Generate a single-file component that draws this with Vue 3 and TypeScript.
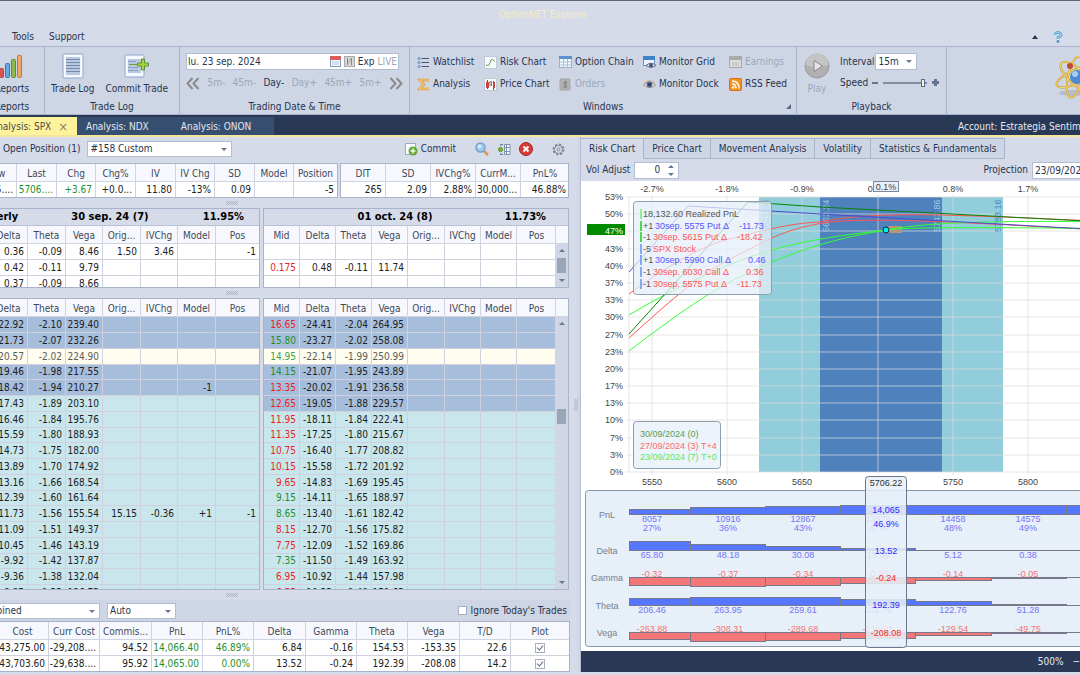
<script setup lang="ts">
import { ref } from 'vue'

interface Row { cells: string[]; tone?: string; mid?: string }
interface Pane { name: string; left: string; center: string; right: string; cols: string[]; widths: number[]; rows: Row[]; scroll: boolean }
interface Section { id: string; titled: boolean; panes: Pane[] }

const leftCols = ['Delta', 'Theta', 'Vega', 'Orig...', 'IVChg', 'Model', 'Pos']
const leftWidths = [38, 38, 37, 38, 37, 38, 43]
const rightCols = ['Mid', 'Delta', 'Theta', 'Vega', 'Orig...', 'IVChg', 'Model', 'Pos']
const rightWidths = [36, 36, 36, 36, 37, 36, 36, 39]

const pad = (text: string, count: number): string[] => {
  const cells = text.split('|')
  while (cells.length < count) cells.push('')
  return cells
}
const chainLeft = [
  '-22.92|-2.10|239.40', '-21.73|-2.07|232.26', '-20.57|-2.02|224.90', '-19.46|-1.98|217.55',
  '-18.42|-1.94|210.27|||-1', '-17.43|-1.89|203.10', '-16.46|-1.84|195.76', '-15.59|-1.80|188.93',
  '-14.73|-1.75|182.00', '-13.89|-1.70|174.92', '-13.16|-1.66|168.54', '-12.39|-1.60|161.64',
  '-11.73|-1.56|155.54|15.15|-0.36|+1|-1', '-11.09|-1.51|149.37', '-10.45|-1.46|143.19',
  '-9.92|-1.42|137.87', '-9.36|-1.38|132.04', '-8.85|-1.33|126.73',
]
const chainRight = [
  '16.65|-24.41|-2.04|264.95', '15.80|-23.27|-2.02|258.08', '14.95|-22.14|-1.99|250.99', '14.15|-21.07|-1.95|243.89',
  '13.35|-20.02|-1.91|236.58', '12.65|-19.05|-1.88|229.57', '11.95|-18.11|-1.84|222.41', '11.35|-17.25|-1.80|215.67',
  '10.75|-16.40|-1.77|208.82', '10.15|-15.58|-1.72|201.92', '9.65|-14.83|-1.69|195.45', '9.15|-14.11|-1.65|188.97',
  '8.65|-13.40|-1.61|182.42', '8.15|-12.70|-1.56|175.82', '7.75|-12.09|-1.52|169.86', '7.35|-11.50|-1.49|163.92',
  '6.95|-10.92|-1.44|157.98', '6.55|-10.33|-1.40|151.63',
]
const risingMids = [1, 2, 3, 11, 12, 15]
const tone = (i: number, lastBlue: number) => (i === 2 ? 'cream' : i <= lastBlue ? 'blue' : 'cyan')

const sections: Section[] = [
  {
    id: 'hedge', titled: true, panes: [
      { name: 'left', left: 'Quarterly', center: '30 sep. 24 (7)', right: '11.95%', cols: leftCols, widths: leftWidths, scroll: false,
        rows: ['0.36|-0.09|8.46|1.50|3.46||-1', '0.42|-0.11|9.79', '0.37|-0.09|8.66'].map(t => ({ cells: pad(t, 7) })) },
      { name: 'right', left: '', center: '01 oct. 24 (8)', right: '11.73%', cols: rightCols, widths: rightWidths, scroll: true,
        rows: ['', '0.175|0.48|-0.11|11.74', ''].map(t => ({ cells: pad(t, 8), mid: 'down' })) },
    ],
  },
  {
    id: 'chain', titled: false, panes: [
      { name: 'left', left: '', center: '', right: '', cols: leftCols, widths: leftWidths, scroll: false,
        rows: chainLeft.map((t, i) => ({ cells: pad(t, 7), tone: tone(i, 4) })) },
      { name: 'right', left: '', center: '', right: '', cols: rightCols, widths: rightWidths, scroll: true,
        rows: chainRight.map((t, i) => ({ cells: pad(t, 8), tone: tone(i, 5), mid: risingMids.includes(i) ? 'up' : 'down' })) },
    ],
  },
]

const quoteCols = ['Low', 'Last', 'Chg', 'Chg%', 'IV', 'IV Chg', 'SD', 'Model', 'Position']
const quoteWidths = [40, 40, 39, 40, 40, 39, 40, 39, 43]
const quote = ['5695....', '5706....', '+3.67', '+0.0...', '11.80', '-13%', '0.09', '', '-5']
const statCols = ['DIT', 'SD', 'IVChg%', 'CurrM...', 'PnL%']
const statWidths = [45, 45, 45, 45, 48]
const stats = ['265', '2.09', '2.88%', '30,000...', '46.88%']

const totalCols = ['Cost', 'Curr Cost', 'Commis...', 'PnL', 'PnL%', 'Delta', 'Gamma', 'Theta', 'Vega', 'T/D', 'Plot']
const totalWidths = [52, 51, 52, 51, 51, 52, 51, 51, 52, 51, 58]
const totals = [
  ['43,275.00', '-29,208....', '94.52', '14,066.40', '46.89%', '6.84', '-0.16', '154.53', '-153.35', '22.6'],
  ['43,703.60', '-29,638....', '95.92', '14,065.00', '0.00%', '13.52', '-0.24', '192.39', '-208.08', '14.2'],
]

const adjust = ref('0')
const projection = ref('23/09/2024')
const tradeDate = ref('lu. 23 sep. 2024')
const speed = ref(95)
const steps = ['5m-', '45m-', 'Day-', 'Day+', '45m+', '5m+']
const chartTabs = ['Risk Chart', 'Price Chart', 'Movement Analysis', 'Volatility', 'Statistics & Fundamentals']

const yLabels = ['53%', '50%', '47%', '43%', '40%', '37%', '33%', '30%', '27%', '23%', '20%', '17%', '13%', '10%', '7%', '3%', '0%']
const gridY = (i: number) => Math.round(16 + (i * 275) / 16)
const xTicks = [
  { x: 71, strike: '5550', move: '-2.7%' }, { x: 146, strike: '5600', move: '-1.8%' },
  { x: 221, strike: '5650', move: '-0.9%' }, { x: 297, strike: '', move: '0.0%' },
  { x: 372, strike: '5750', move: '0.8%' }, { x: 447, strike: '5800', move: '1.7%' },
]
const curves = [
  { color: '#ff5555', d: 'M48 113 C82 88 120 64 152 57 C190 47 215 42 239 41 C270 34 320 33 362 34 C430 36 470 38 560 42' },
  { color: '#ff5555', d: 'M48 157 C75 133 110 100 140 83 C180 62 200 50 232 44 C255 38 300 39 340 40 C400 42 460 46 560 51' },
  { color: '#33ff33', d: 'M48 134 C90 109 140 85 175 74 C215 61 245 56 305 49 C335 46 380 46 560 48' },
  { color: '#33ff33', d: 'M48 170 C95 134 135 106 165 93 C205 73 245 59 305 49 C345 42 390 39 560 41' },
  { color: '#4a4ad2', d: 'M48 91 L107 25 L239 33 L560 51' },
  { color: '#078407', d: 'M48 153 L167 21 L239 26 L560 43' },
]
const deviations = [
  { x: 188, text: '5621.94', fill: '#5f9fc8' }, { x: 248, text: '5662.24', fill: '#9cc9e6' },
  { x: 359, text: '5742.86', fill: '#9cc9e6' }, { x: 420, text: '5783.16', fill: '#4f86c0' },
]
const legs = [
  { bar: '#90ee90', qty: '', name: '18,132.60 Realized PnL', nx: 62, value: '', vx: 0, color: '#555' },
  { bar: '#50d850', qty: '+1', name: '30sep. 5575 Put Δ', nx: 74, value: '-11.73', vx: 158, color: '#5454ff' },
  { bar: '#50d850', qty: '-1', name: '30sep. 5615 Put Δ', nx: 72, value: '-18.42', vx: 156, color: '#ff5555' },
  { bar: '#84a9f0', qty: '-5', name: 'SPX Stock', nx: 72, value: '', vx: 0, color: '#ff5555' },
  { bar: '#84a9f0', qty: '+1', name: '30sep. 5990 Call Δ', nx: 74, value: '0.46', vx: 167, color: '#5454ff' },
  { bar: '#84a9f0', qty: '-1', name: '30sep. 6030 Call Δ', nx: 72, value: '0.36', vx: 165, color: '#ff5555' },
  { bar: '#84a9f0', qty: '-1', name: '30sep. 5575 Put Δ', nx: 72, value: '-11.73', vx: 156, color: '#ff5555' },
]
const legY = (i: number) => Math.round(36 + i * 11.6)

const edges = [48, 109, 184, 259, 334, 410, 485, 560]
const centers = [71, 147, 222, 297, 372, 447]
const greeks = [
  { name: 'PnL', base: 333, dir: -1, h: [5, 7, 8, 9, 9, 9, 9], ty: 341, vals: ['8057', '10916', '12867', '13976', '14458', '14575'], pct: ['27%', '36%', '43%', '47%', '48%', '49%'], now: '14,065', nowY: 332 },
  { name: 'Delta', base: 369, dir: -1, h: [9, 6, 4, 2, 0, 0, 0], ty: 377, vals: ['65.80', '48.18', '30.08', '15.09', '5.12', '0.38'], pct: [], now: '13.52', nowY: 373 },
  { name: 'Gamma', base: 396, dir: 1, h: [8, 9, 8, 6, 3, 1, 0], ty: 396, vals: ['-0.32', '-0.37', '-0.34', '-0.25', '-0.14', '-0.05'], pct: [], now: '-0.24', nowY: 400 },
  { name: 'Theta', base: 424, dir: -1, h: [7, 8, 8, 6, 4, 1, 0], ty: 432, vals: ['206.46', '263.95', '259.61', '201.79', '122.76', '51.28'], pct: [], now: '192.39', nowY: 427 },
  { name: 'Vega', base: 451, dir: 1, h: [7, 9, 8, 6, 3, 1, 0], ty: 451, vals: ['-263.88', '-308.31', '-289.68', '-218.91', '-129.54', '-49.75'], pct: [], now: '-208.08', nowY: 455 },
]
</script>

<template>
  <div class="app">
    <header class="titlebar">OptionNET Explorer</header>
    <nav class="menubar">
      <button>Tools</button>
      <button>Support</button>
      <span class="grow"></span>
      <button class="icon" aria-label="Collapse ribbon"><svg width="6" height="4"><path d="M0 4L3 0L6 4Z" fill="#27344d" /></svg></button>
      <button class="icon" aria-label="Help">
        <svg width="10" height="12" viewBox="0 0 10 12"><path d="M2 4Q2 1.5 5 1.5T8 4Q8 5.5 5 6.5V8" fill="none" stroke="#4b93c4" stroke-width="2.6" /><path d="M2 4Q2 1.5 5 1.5T8 4Q8 5.5 5 6.5V8" fill="none" stroke="#9fd2f0" stroke-width="1.2" /><circle cx="5" cy="10.5" r="1.4" fill="#4b93c4" /></svg>
      </button>
    </nav>

    <section class="ribbon">
      <div class="group reports">
        <button class="big">
          <svg width="32" height="26" viewBox="0 0 32 26"><g stroke-width="1"><rect x="8.5" y="15.5" width="4" height="9" rx="1" fill="#d9534e" stroke="#a94a4a" /><rect x="14.5" y="10.5" width="4" height="14" rx="1" fill="#69a9e0" stroke="#3d74ad" /><rect x="20.5" y="6.5" width="4" height="18" rx="1" fill="#8cba4d" stroke="#5f8d33" /><rect x="26.5" y="2.5" width="4" height="22" rx="1" fill="#f0a860" stroke="#b57a40" /></g></svg>
          <span>Reports</span>
        </button>
        <div class="caption">Reports</div>
      </div>
      <div class="group log">
        <div class="tools">
          <button class="big">
            <svg width="22" height="26" viewBox="0 0 22 26"><rect x="1" y="1" width="20" height="24" rx="1" fill="#f4f8ff" stroke="#8ea4ca" /><rect x="4" y="4" width="14" height="18" fill="#b9c9e2" /><path d="M4 6.5H18M4 9.5H18M4 12.5H18M4 15.5H18M4 18.5H18" stroke="#7489ad" /></svg>
            <span>Trade Log</span>
          </button>
          <button class="big">
            <svg width="26" height="26" viewBox="0 0 26 26"><rect x="1" y="2" width="19" height="22" rx="1" fill="#f4f8ff" stroke="#8ea4ca" /><rect x="4" y="6" width="13" height="14" fill="#b9c9e2" /><path d="M4 8.5H12M4 14.5H14M4 17.5H14" stroke="#8da0c1" /><path d="M5 11.5H15" stroke="#6ca032" /><path d="M17.500 6h3v4h4v3h-4v4h-3v-4h-4v-3h4z" fill="#a5d23c" stroke="#5e942d" /></svg>
            <span>Commit Trade</span>
          </button>
        </div>
        <div class="caption">Trade Log</div>
      </div>
      <div class="group date">
        <div class="datebox">
          <input v-model="tradeDate" aria-label="Trading date" />
          <svg width="11" height="11" viewBox="0 0 11 11"><rect x=".5" y=".5" width="10" height="10" fill="#eef4ff" stroke="#8796bd" /><rect width="11" height="4" fill="#d8605a" /><path d="M2 6h7M2 8h7" stroke="#b9cae8" /></svg>
          <svg width="11" height="11" viewBox="0 0 11 11"><rect x=".5" y=".5" width="10" height="10" fill="#d7d7d7" stroke="#aaa" /><path d="M3.5 2v7M3.5 6h2M7.5 2v7M5.5 4h2" stroke="#888" fill="none" /></svg>
          <span>Exp</span><span class="off">LIVE</span>
        </div>
        <div class="steps">
          <button aria-label="Back"><svg width="14" height="13" viewBox="0 0 14 13"><path d="M6.5 1L1.5 6.5L6.5 12M12.5 1L7.5 6.5L12.5 12" fill="none" stroke="#8b8b8b" stroke-width="2" /></svg></button>
          <button v-for="s in steps" :key="s" :class="{ off: s !== 'Day-' }">{{ s }}</button>
          <button aria-label="Forward"><svg width="14" height="13" viewBox="0 0 14 13"><path d="M1.5 1L6.5 6.5L1.5 12M7.5 1L12.5 6.5L7.5 12" fill="none" stroke="#8b8b8b" stroke-width="2" /></svg></button>
        </div>
        <div class="caption">Trading Date &amp; Time</div>
      </div>
      <div class="group windows">
        <div class="wingrid">
          <button><svg width="13" height="13" viewBox="0 0 13 13"><path d="M4.5 2.5H12M4.5 6.5H12M4.5 10.5H12" stroke="#4a5568" /><g fill="#cfe2fa" stroke="#5b87c5"><circle cx="2" cy="2.5" r="1" /><circle cx="2" cy="6.5" r="1" /><circle cx="2" cy="10.5" r="1" /></g></svg>Watchlist</button>
          <button><svg width="13" height="13" viewBox="0 0 13 13"><rect x=".5" y=".5" width="12" height="12" fill="#f6fafb" stroke="#c1cad8" /><path d="M2 9Q5 11 6 7Q7 2 9 4T11 5" fill="none" stroke="#6c9a64" /></svg>Risk Chart</button>
          <button><svg width="13" height="13" viewBox="0 0 13 13"><rect x=".5" y=".5" width="12" height="11" fill="#f2f8ff" stroke="#9bb1d0" /><rect width="13" height="3" fill="#5f92cc" /><path d="M1 6H12M1 9H12M4.5 3V12M8.5 3V12" stroke="#a8bfdd" /></svg>Option Chain</button>
          <button><svg width="13" height="13" viewBox="0 0 13 13"><rect x=".5" y=".5" width="11" height="9" fill="#eaf3ff" stroke="#6d94c4" /><rect width="12" height="4" fill="#3e83cc" /><path d="M3 9.5Q8 5 13 9.5Q8 13 3 9.5" fill="#dfe4ee" stroke="#596985" /><circle cx="8" cy="9.5" r="2" fill="#435779" /></svg>Monitor Grid</button>
          <button class="off"><svg width="13" height="13" viewBox="0 0 13 13"><rect x=".5" y=".5" width="12" height="11" fill="#ddd" stroke="#aaa" /><rect width="13" height="4" fill="#aaa" /><path d="M3 7h7M3 9h7" stroke="#aaa" stroke-dasharray="2 1" /></svg>Earnings</button>
          <button><svg width="13" height="13" viewBox="0 0 13 13"><path d="M10.5 3.5V2H2.500L7 6.5L2.500 11H10.5V9.5" fill="none" stroke="#d99a48" stroke-width="2.6" /><path d="M10.5 3.5V2H2.500L7 6.5L2.500 11H10.5V9.5" fill="none" stroke="#f9c878" stroke-width="1.2" /></svg>Analysis</button>
          <button><svg width="13" height="13" viewBox="0 0 13 13"><rect x=".5" y=".5" width="12" height="12" fill="#fafafa" stroke="#c1cad8" /><path d="M3.5 2v9M9.5 3v9" stroke="#555" /><path d="M6 8V3.500h1.500V8" fill="none" stroke="#777" /><rect x="2" y="4" width="3" height="6" fill="#cc4141" /><rect x="9" y="4" width="2" height="6" fill="#cc4141" /></svg>Price Chart</button>
          <button class="off"><svg width="13" height="13" viewBox="0 0 13 13"><rect x="1" y="1" width="10" height="11" rx="1" fill="#b2b2b2" stroke="#a4a4a4" /><path d="M8.5 4.5Q6 3 4.5 5Q5 6.5 6.5 6.5Q8.5 7 7.5 9Q6 10 4 8.5M6.300 2.5V10.5" fill="none" stroke="#7f7f7f" /></svg>Orders</button>
          <button><svg width="13" height="13" viewBox="0 0 13 13"><path d="M.5 7Q6.5 1 12.5 7Q6.5 12 .5 7" fill="#f5f0ea" stroke="#a78f7c" /><path d="M1 5Q6.5 0 12 5" fill="none" stroke="#d5af8e" /><circle cx="6.5" cy="6.5" r="3" fill="#496c9d" /><circle cx="6.5" cy="6.5" r="1.3" fill="#1d2c48" /></svg>Monitor Dock</button>
          <button><svg width="13" height="13" viewBox="0 0 13 13"><rect x=".5" y=".5" width="12" height="12" rx="1" fill="#f78f20" stroke="#d97318" /><circle cx="4" cy="9.5" r="1.2" fill="#fff" /><path d="M3 6Q7 6 7 10.5M3 3Q10 3 10 10.5" fill="none" stroke="#fff" stroke-width="1.4" /></svg>RSS Feed</button>
        </div>
        <div class="caption">Windows</div>
        <svg class="launcher" width="5" height="5"><path d="M5 0V5H0Z" fill="#596b8b" /></svg>
      </div>
      <div class="group playback">
        <div class="tools">
          <button class="big off">
            <svg width="26" height="26" viewBox="0 0 26 26"><circle cx="13" cy="13" r="12" fill="#b0b0b0" stroke="#999" /><path d="M1.5 12A11.5 11.5 0 0 1 24.5 12Q13 16 1.5 12" fill="#c4c4c4" /><path d="M10 7.5L18.5 13L10 18.5Z" fill="#e3e3e3" stroke="#888" /></svg>
            <span>Play</span>
          </button>
          <div class="playopts">
            <label>Interval
              <span class="combo interval"><select><option>15m</option></select></span>
            </label>
            <label>Speed <i class="minus"></i><input v-model="speed" type="range" /><i class="plus"></i></label>
          </div>
        </div>
        <div class="caption">Playback</div>
      </div>
      <svg class="logo" width="42" height="46" viewBox="0 0 42 46"><ellipse cx="18" cy="37" rx="14" ry="3" fill="#b5bccb" /><g fill="none" stroke="#c4982f" stroke-width="2"><ellipse cx="20" cy="21" rx="20" ry="7" transform="rotate(-25 20 21)" /><ellipse cx="20" cy="21" rx="7" ry="21" transform="rotate(12 20 21)" /><ellipse cx="22" cy="21" rx="21" ry="8" transform="rotate(42 22 21)" /></g><g fill="none" stroke="#f5d765"><ellipse cx="20" cy="21" rx="20" ry="7" transform="rotate(-25 20 21)" /><ellipse cx="20" cy="21" rx="7" ry="21" transform="rotate(12 20 21)" /><ellipse cx="22" cy="21" rx="21" ry="8" transform="rotate(42 22 21)" /></g><circle cx="22" cy="21" r="7" fill="#4e88d0" /><circle cx="20" cy="18" r="3" fill="#a9ccf2" /><circle cx="15" cy="10" r="3" fill="#c54830" /><circle cx="28" cy="41" r="3" fill="#cc3a44" /></svg>
    </section>

    <nav class="doctabs">
      <button class="doc active">Analysis: SPX <span>×</span></button>
      <button class="doc">Analysis: NDX</button>
      <button class="doc onon">Analysis: ONON</button>
      <span class="account">Account: Estrategia Sentimi</span>
    </nav>

    <main class="work">
      <section class="analysis">
        <div class="toolbar">
          <label for="position">Open Position (1)</label>
          <span class="combo position"><select id="position"><option>#158 Custom</option></select></span>
          <span class="grow"></span>
          <button class="commit"><svg width="13" height="13" viewBox="0 0 13 13"><rect x=".5" y=".5" width="10" height="11" fill="#f8fbff" stroke="#9aabc9" /><circle cx="8" cy="8" r="4.5" fill="#69a638" /><path d="M8 5.5v5M5.5 8h5" stroke="#f0ffe4" stroke-width="1.5" /></svg>Commit</button>
          <button class="search" aria-label="Find"><svg width="14" height="14" viewBox="0 0 14 14"><path d="M9 9L13 13" stroke="#d39a57" stroke-width="2.5" /><circle cx="5.5" cy="5.5" r="4.5" fill="#9acbf2" stroke="#7b9fd0" stroke-width="1.5" /><circle cx="4.5" cy="4.5" r="2" fill="#d5ecff" /></svg></button>
          <button aria-label="Add columns"><svg width="14" height="13" viewBox="0 0 14 13"><path d="M7.500 1.5H13V11.5H7.500Z" fill="#f6f8fc" stroke="#8090b0" /><path d="M7.500 4.5H13M7.500 8.500H13M9.500 1V12" stroke="#8090b0" /><path d="M3.5 4v5M1 6.5h5" stroke="#74a93e" stroke-width="3" /><path d="M6 1.500H3.500V3M6 11.500H3.500V10" stroke="#65779b" fill="none" /></svg></button>
          <button aria-label="Delete"><svg width="14" height="14" viewBox="0 0 14 14"><circle cx="7" cy="7" r="6.5" fill="#d83c35" stroke="#a32925" /><path d="M4.5 4.5L9.5 9.5M9.5 4.5L4.5 9.5" stroke="#fff" stroke-width="2" /></svg></button>
          <button class="gear" aria-label="Settings"><svg width="13" height="13" viewBox="0 0 13 13"><circle cx="6.5" cy="6.5" r="5" fill="none" stroke="#7b8699" stroke-width="2" stroke-dasharray="2.2 1.7" /><circle cx="6.5" cy="6.5" r="4" fill="#dde3ee" stroke="#7b8699" /><circle cx="6.5" cy="6.5" r="1.5" fill="#d5dbe8" stroke="#7b8699" /></svg></button>
        </div>

        <div class="summary">
          <div class="pane"><table class="quote">
            <colgroup><col v-for="(w, i) in quoteWidths" :key="i" :style="{ width: w + 'px' }" /></colgroup>
            <thead><tr><th v-for="c in quoteCols" :key="c">{{ c }}</th></tr></thead>
            <tbody><tr><td v-for="(c, i) in quote" :key="i" :class="{ up: i === 1 || i === 2 }">{{ c }}</td></tr></tbody>
          </table></div>
          <div class="pane edge"><table>
            <colgroup><col v-for="(w, i) in statWidths" :key="i" :style="{ width: w + 'px' }" /></colgroup>
            <thead><tr><th v-for="c in statCols" :key="c">{{ c }}</th></tr></thead>
            <tbody><tr><td v-for="c in stats" :key="c">{{ c }}</td></tr></tbody>
          </table></div>
        </div>

        <template v-for="s in sections" :key="s.id">
          <div class="splitter"><i></i></div>
          <div class="panes" :class="s.id">
            <div v-for="p in s.panes" :key="p.name" class="pane" :class="p.name">
              <div v-if="s.titled" class="expiry"><span>{{ p.left }}</span><span>{{ p.center }}</span><span>{{ p.right }}</span></div>
              <div class="panebody">
                <div class="tablebox">
                  <table>
                    <colgroup><col v-for="(w, i) in p.widths" :key="i" :style="{ width: w + 'px' }" /></colgroup>
                    <thead><tr><th v-for="c in p.cols" :key="c">{{ c }}</th></tr></thead>
                    <tbody>
                      <tr v-for="(r, ri) in p.rows" :key="ri" :class="r.tone">
                        <td v-for="(c, ci) in r.cells" :key="ci" :class="ci === 0 ? r.mid : ''">{{ c }}</td>
                      </tr>
                    </tbody>
                  </table>
                </div>
                <div v-if="p.scroll" class="scroll">
                  <div class="corner"></div>
                  <svg width="6" height="3"><path d="M0 3L3 0L6 3Z" fill="#66778f" /></svg>
                  <span class="before"></span><span class="thumb"></span><span class="after"></span>
                  <svg width="6" height="3"><path d="M0 0L3 3L6 0Z" fill="#66778f" /></svg>
                </div>
              </div>
            </div>
          </div>
        </template>
        <div class="splitter"><i></i></div>

        <div class="bottombar">
          <span class="combo mode"><select aria-label="Mode"><option>Combined</option></select></span>
          <span class="combo auto"><select aria-label="Grouping"><option>Auto</option></select></span>
          <span class="grow"></span>
          <label class="ignore"><input type="checkbox" />Ignore Today's Trades</label>
        </div>
        <div class="pane totals"><table>
          <colgroup><col v-for="(w, i) in totalWidths" :key="i" :style="{ width: w + 'px' }" /></colgroup>
          <thead><tr><th v-for="c in totalCols" :key="c">{{ c }}</th></tr></thead>
          <tbody>
            <tr v-for="(r, ri) in totals" :key="ri">
              <td v-for="(c, i) in r" :key="i" :class="{ up: i === 3 || i === 4 }">{{ c }}</td>
              <td class="plot"><input type="checkbox" checked :aria-label="'Plot row ' + (ri + 1)" /></td>
            </tr>
          </tbody>
        </table></div>
      </section>

      <div class="vsplit"><i></i></div>

      <section class="charts">
        <nav class="charttabs"><button v-for="(t, i) in chartTabs" :key="t" :class="{ on: i === 0 }">{{ t }}</button></nav>
        <div class="chartopts">
          <label>Vol Adjust <span class="spin"><input v-model="adjust" /><svg width="6" height="11"><path d="M0 3L3 0L6 3Z M0 8L3 11L6 8Z" fill="#66778f" /></svg></span></label>
          <span class="grow"></span>
          <label class="proj">Projection <input v-model="projection" /></label>
        </div>
        <svg class="chart" role="img" aria-label="Risk chart">
          <rect x="178" y="16" width="244" height="275" fill="#92cddc" />
          <rect x="239" y="16" width="122" height="275" fill="#4f81bd" />
          <g stroke="#dcdcdc" stroke-opacity=".7">
            <line v-for="(l, i) in yLabels" :key="l" x1="45" x2="100%" :y1="gridY(i)" :y2="gridY(i)" />
            <line v-for="t in xTicks" :key="t.x" :x1="t.x" :x2="t.x" y1="14" y2="294" />
            <line x1="48" x2="48" y1="16" y2="291" />
          </g>
          <text v-for="d in deviations" :key="d.text" :fill="d.fill" :transform="`translate(${d.x} 51) rotate(-90)`">{{ d.text }}</text>
          <rect x="307" y="45" width="14" height="7" fill="#b9937a" />
          <path v-for="(c, i) in curves" :key="i" :d="c.d" :stroke="c.color" fill="none" stroke-width="1" />
          <circle cx="305" cy="49" r="3" fill="#00f0f0" stroke="#124" />
          <rect x="6" y="43" width="38" height="11" fill="#008a00" />
          <g fill="#444" text-anchor="end">
            <text v-for="(l, i) in yLabels" :key="l" x="42" :y="gridY(i) + 3" :class="{ hot: i === 2 }">{{ l }}</text>
          </g>
          <g fill="#444" text-anchor="middle">
            <text v-for="t in xTicks" :key="t.x" :x="t.x" y="11">{{ t.move }}</text>
            <text v-for="t in xTicks" :key="t.x" :x="t.x" y="304">{{ t.strike }}</text>
          </g>
          <rect x="292.5" y=".5" width="25" height="10" fill="#e8eff8" stroke="#7c899c" />
          <text x="305" y="9" text-anchor="middle" fill="#444">0.1%</text>

          <rect x="52.5" y="20.5" width="138" height="93" rx="3" fill="#e6edf8" fill-opacity=".75" stroke="#8e9db0" />
          <g v-for="(l, i) in legs" :key="i">
            <rect x="59" :y="legY(i) - 8" width="2" height="10" :fill="l.bar" />
            <text x="62" :y="legY(i)" fill="#555">{{ l.qty }}</text>
            <text :x="l.nx" :y="legY(i)" :fill="l.color">{{ l.name }}</text>
            <text :x="l.vx" :y="legY(i)" :fill="l.color">{{ l.value }}</text>
          </g>
          <rect x="52.5" y="240.5" width="87" height="47" rx="3" fill="#ecf2fb" fill-opacity=".95" stroke="#8e9db0" />
          <text x="59" y="256" fill="#559b55">30/09/2024 (0)</text>
          <text x="59" y="268" fill="#ff6868">27/09/2024 (3) T+4</text>
          <text x="59" y="279" fill="#5be65b">23/09/2024 (7) T+0</text>

          <rect x="4.5" y="309.5" width="120%" height="156" rx="3" fill="#e7eff8" stroke="#8a97a8" />
          <g v-for="g in greeks" :key="g.name">
            <text x="26" :y="g.base + 4" text-anchor="middle" fill="#777f8a">{{ g.name }}</text>
            <text v-for="(v, i) in g.vals" :key="i" :x="centers[i]" :y="g.ty" text-anchor="middle" :fill="g.dir < 0 ? '#7474fb' : '#f47474'">{{ v }}</text>
            <text v-for="(v, i) in g.pct" :key="v" :x="centers[i]" :y="g.ty + 9" text-anchor="middle" fill="#7474fb">{{ v }}</text>
            <rect v-for="(h, i) in g.h" :key="i" :x="edges[i] + 0.5" :y="(g.dir < 0 ? g.base - h : g.base) + 0.5" :width="i < 6 ? edges[i + 1] - edges[i] : 75" :height="h" :fill="g.dir < 0 ? '#5577ff' : '#f47777'" stroke="#77798a" />
            <line x1="48" x2="100%" :y1="g.base + 0.5" :y2="g.base + 0.5" stroke="#77798a" />
          </g>
          <rect x="284.5" y="295.5" width="41" height="171" rx="3" fill="#e7eff8" fill-opacity=".87" stroke="#68788e" />
          <g text-anchor="middle">
            <text x="305" y="305" fill="#333">5706.22</text>
            <text v-for="g in greeks" :key="g.name" x="305" :y="g.nowY" :fill="g.dir < 0 ? '#2b2bf5' : '#f62b2b'">{{ g.now }}</text>
            <text x="305" y="346" fill="#2b2bf5">46.9%</text>
          </g>
        </svg>
        <footer class="status"><span>500%</span><span>−</span></footer>
      </section>
    </main>
  </div>
</template>

<style>
html, body { margin: 0; overflow: hidden; background: #d6dbe9; }
</style>

<style scoped>
* { box-sizing: border-box; }
.app { height: 100vh; display: flex; flex-direction: column; overflow: hidden; background: #d6dbe9; color: #27344d; font: 10px/14px "DejaVu Sans Condensed", "DejaVu Sans", sans-serif; white-space: nowrap; border-top: 1px solid #62646e; padding-bottom: 3px; }
button, input, select { font: inherit; color: inherit; border: 0; background: none; padding: 0; margin: 0; border-radius: 0; }
button { display: flex; align-items: center; flex: none; }
svg { flex: none; }
.grow { flex: 1; }
.off { color: #9ba6b9; }
.titlebar { height: 26px; line-height: 27px; text-align: center; padding-left: 6px; color: #f3ecc3; flex: none; }
.menubar { height: 19px; display: flex; gap: 15px; padding: 1px 17px 0 12px; flex: none; align-items: center; }

.ribbon { flex: none; height: 69px; display: flex; background: #ced6e6; border-top: 1px solid #a9b4cc; border-bottom: 1px solid #a9b4cc; overflow: hidden; }
.group { flex: none; position: relative; display: flex; flex-direction: column; border-right: 1px solid #a9b4cc; padding-top: 6px; }
.caption { margin-top: auto; text-align: center; height: 14px; }
.tools { display: flex; }
.big { flex-direction: column; gap: 3px; }
.reports { width: 65px; margin-left: -20px; }
.reports .big svg { margin-right: 11px; }
.log { width: 135px; }
.log .tools { padding-left: 6px; gap: 11px; }
.date { width: 230px; padding-left: 6px; padding-right: 6px; }
.datebox { display: flex; align-items: center; gap: 3px; background: #fff; border: 1px solid #b0bdd3; height: 17px; margin-right: 4px; padding: 0 1px; }
.datebox input { flex: 1; min-width: 0; }
.steps { display: flex; justify-content: space-between; margin-top: 6px; }
.windows { width: 387px; }
.wingrid { display: grid; grid-template-columns: 67px 75px 84px 86px 1fr; grid-auto-rows: 16px; row-gap: 6px; padding-left: 7px; padding-top: 1px; }
.wingrid button { gap: 3px; }
.launcher { position: absolute; right: 5px; bottom: 5px; }
.playback { width: 150px; }
.playback .tools { padding-left: 7px; }
.playopts { margin-left: 10px; display: grid; grid-auto-rows: 17px; row-gap: 4px; }
.playopts label { display: flex; align-items: center; gap: 1px; }
.playopts input { appearance: none; width: 44px; height: 10px; margin: 0 4px; background: linear-gradient(#7f8da3, #7f8da3) center / 100% 2px no-repeat; }
.playopts input::-webkit-slider-thumb { appearance: none; width: 4px; height: 8px; background: #fffbe2; border: 1px solid #596b86; }
.minus { width: 6px; height: 2px; background: #65758f; margin-left: 3px; }
.plus { width: 7px; height: 7px; background: linear-gradient(#65758f, #65758f) center / 7px 3px no-repeat, linear-gradient(#65758f, #65758f) center / 3px 7px no-repeat; }
.logo { margin: 9px -17px 0 auto; }

.combo { position: relative; display: inline-flex; background: #fff; border: 1px solid #b0bdd3; height: 16px; }
.combo select { appearance: none; width: 100%; padding: 0 2px; }
.combo::after { content: ""; position: absolute; right: 4px; top: 6px; border: 3px solid transparent; border-top-color: #66778f; border-bottom: 0; }
.interval { width: 42px; height: 17px; }

.doctabs { flex: none; height: 22px; display: flex; align-items: stretch; background: #293955; border-bottom: 2px solid #f3e59a; padding-top: 2px; color: #e4e9f2; }
.doc { padding: 1px 9px 0; background: #364e6f; }
.doc.active { margin-left: -18px; width: 95px; background: #fff29d; color: #4b4b45; justify-content: space-between; }
.doc.active span { color: #8a835c; font-size: 13px; }
.doc.onon { padding: 1px 23px 0 23px; }
.account { margin-left: auto; width: 122px; overflow: hidden; line-height: 19px; }

.work { flex: 1; min-height: 0; display: grid; grid-template-columns: minmax(0, 570fr) 10px minmax(0, 500fr); }
.analysis { min-width: 0; min-height: 0; display: flex; flex-direction: column; overflow: hidden; }
.toolbar { flex: none; height: 26px; display: flex; align-items: center; padding: 0 5px 2px 3px; }
.position { width: 145px; margin-left: 7px; }
.toolbar button + button { margin-left: 8px; }
.commit { gap: 3px; }
.toolbar .search { margin-left: 19px; }
.toolbar .gear { margin-left: 19px; }
.pane { border: 1px solid #a9b4cc; background: #fff; overflow: hidden; min-width: 0; min-height: 0; }
table { width: 100%; table-layout: fixed; border-collapse: separate; border-spacing: 0; color: #202020; }
th { height: 18px; line-height: 15px; padding: 1px 0 0; font-weight: normal; color: #3d4859; background: #f6f8fd; border-right: 1px solid #d0d4e2; border-bottom: 1px solid #d0d4e2; overflow: hidden; }
td { height: 16px; line-height: 14px; padding: 0 3px 0 0; text-align: right; border-right: 1px solid #d0d0df; border-bottom: 1px solid #d0d0df; overflow: hidden; }
th:last-child, td:last-child { border-right: 0; }
.summary { flex: none; display: grid; grid-template-columns: minmax(0, 338fr) minmax(0, 229fr); gap: 2px; margin-right: 1px; }
.summary .pane { border-left: 0; height: 35px; }
.summary .edge { border-left: 1px solid #a9b4cc; }
.quote { margin-left: -23px; width: calc(100% + 23px); }
.splitter { flex: none; height: 10px; display: flex; align-items: center; justify-content: center; }
.splitter i { width: 12px; height: 4px; margin-left: -106px; background: repeating-conic-gradient(#aeb6c8 0 25%, transparent 0 50%) 0 0 / 2px 2px; }
.panes { display: grid; grid-template-columns: minmax(0, 260fr) minmax(0, 306fr); gap: 3px; margin-right: 1px; }
.panes .pane { display: flex; flex-direction: column; }
.hedge { flex: none; height: 80px; }
.chain { flex: 1; min-height: 0; grid-template-rows: minmax(0, 1fr); }
.pane.left { border-left: 0; }
.pane.left table { margin-left: -10px; width: calc(100% + 10px); }
.expiry { flex: none; height: 17px; display: grid; grid-template-columns: 1fr auto 1fr; align-items: center; background: #d6dbe9; border-bottom: 1px solid #b8c2d6; font-size: 11px; font-weight: bold; color: #000; }
.expiry span:last-child { text-align: right; padding-right: 15px; }
.left .expiry { margin-left: -39px; }
.left .expiry span:first-child { padding-left: 4px; }
.right .expiry { margin-left: -42px; }
.right .expiry span:last-child { padding-right: 22px; }
.panebody { flex: 1; min-height: 0; display: flex; }
.tablebox { flex: 1; min-width: 0; overflow: hidden; }
.chain tbody tr:nth-child(4n) td { height: 15px; line-height: 14px; }
.blue { background: #a6bddb; }
.cyan { background: #c8e6ec; }
.cream { background: #fffdf0; color: #5d5c55; }
.up { color: #1f8f2b; }
.down { color: #ee1c25; }
.cream .up { color: #46a04a; }
.scroll { width: 13px; display: flex; flex-direction: column; align-items: center; background: #d0d6e5; padding-bottom: 5px; }
.corner { width: 100%; height: 18px; background: #f6f8fd; border-bottom: 1px solid #d0d4e2; border-left: 1px solid #d0d4e2; margin-bottom: 5px; flex: none; }
.thumb { width: 9px; height: 15px; background: #9aa6b8; flex: none; }
.before { flex: 83; }
.after { flex: 154; }
.hedge .before { flex: 1; }
.hedge .after { flex: 1; }
.bottombar { flex: none; height: 21px; display: flex; align-items: center; background: #ced5e5; padding-right: 3px; }
.mode { width: 127px; margin-left: -27px; }
.auto { width: 69px; margin-left: 7px; }
.ignore { display: flex; align-items: center; gap: 4px; }
input[type="checkbox"] { appearance: none; width: 9px; height: 9px; background: #fff; border: 1px solid #a4afc2; }
.plot { text-align: center; padding: 0; }
.plot input:checked { width: 10px; height: 10px; vertical-align: middle; position: relative; }
.plot input:checked::after { content: ""; position: absolute; left: 2px; top: 0; width: 3px; height: 5px; border: solid #596b8b; border-width: 0 1px 1px 0; transform: rotate(40deg); }
.totals { flex: none; border-left: 0; height: 51px; }
.totals table { margin-left: -3px; width: calc(100% + 3px); }
.totals tr:last-child td { border-bottom: 0; }

.vsplit { display: flex; align-items: center; border-right: 3px solid #d0d6e5; }
.vsplit i { width: 4px; height: 12px; margin-left: 4px; flex: none; background: repeating-conic-gradient(#aeb6c8 0 25%, transparent 0 50%) 0 0 / 2px 2px; }
.charts { min-width: 0; min-height: 0; display: flex; flex-direction: column; overflow: hidden; border-left: 1px solid #b4bed2; }
.charttabs { flex: none; height: 22px; display: flex; padding-top: 1px; }
.charttabs button { padding: 0 8px; background: #ced6e6; border: 1px solid #a9b4cc; border-left: 0; }
.charttabs .on { background: #d6dbe9; border-bottom-color: #d6dbe9; }
.chartopts { flex: none; height: 22px; display: flex; align-items: center; padding-left: 5px; overflow: hidden; }
.chartopts label { display: flex; align-items: center; gap: 4px; }
.spin { display: flex; align-items: center; width: 45px; height: 17px; padding-right: 4px; background: #fff; border: 1px solid #b0bdd3; }
.spin input { flex: 1; min-width: 0; text-align: right; padding-right: 8px; }
.proj input { width: 70px; height: 17px; background: #fff; border: 1px solid #b0bdd3; padding: 0 2px; margin-right: -22px; }
.chart { flex: 1; min-height: 0; width: 100%; background: #fff; display: block; font: 9px "Liberation Sans", Arial, sans-serif; }
.hot { fill: #fff; }
.status { flex: none; height: 21px; background: #293955; color: #e4e9f2; display: flex; justify-content: flex-end; align-items: center; gap: 9px; }
</style>
